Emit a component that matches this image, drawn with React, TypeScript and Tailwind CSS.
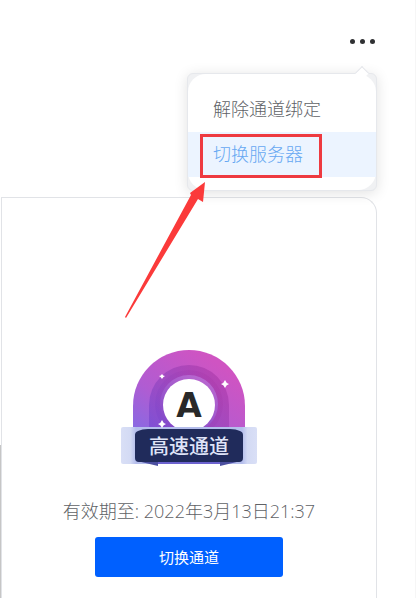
import React from "react";

function ChannelBadge() {
  return (
    <svg
      width="136"
      height="118"
      viewBox="0 0 136 118"
      role="img"
      aria-label="A 高速通道"
    >
      <defs>
        <linearGradient id="arch" x1="0" y1="1" x2="0.75" y2="0.15">
          <stop offset="0" stopColor="#806ce6" />
          <stop offset="0.45" stopColor="#b05cd2" />
          <stop offset="1" stopColor="#cf54c2" />
        </linearGradient>
        <linearGradient id="inner" x1="0" y1="1" x2="0.9" y2="0.2">
          <stop offset="0" stopColor="#7048d4" />
          <stop offset="0.5" stopColor="#9245bf" />
          <stop offset="1" stopColor="#ad3cac" />
        </linearGradient>
        <linearGradient id="ring" x1="0" y1="1" x2="0.6" y2="0">
          <stop offset="0" stopColor="#7a45c8" />
          <stop offset="1" stopColor="#b766cf" />
        </linearGradient>
        <linearGradient id="wing" x1="0" y1="0" x2="1" y2="0">
          <stop offset="0" stopColor="#d9dff6" />
          <stop offset="0.07" stopColor="#d3daf4" />
          <stop offset="0.11" stopColor="#b4bdec" />
          <stop offset="0.89" stopColor="#b4bdec" />
          <stop offset="0.93" stopColor="#d3daf4" />
          <stop offset="1" stopColor="#d9dff6" />
        </linearGradient>
      </defs>
      <path d="M12 90V57a56 56 0 0 1 112 0v33z" fill="url(#arch)" />
      <path d="M28 90V56a40 40 0 0 1 80 0v34z" fill="url(#inner)" opacity="0.7" />
      <circle cx="68" cy="55" r="34" fill="url(#inner)" opacity="0.5" />
      <circle cx="68" cy="55" r="29" fill="url(#ring)" />
      <circle cx="68" cy="56" r="26" fill="#fff" />
      <rect x="0" y="78" width="136" height="37" rx="2" fill="url(#wing)" />
      <rect x="34" y="112" width="68" height="3" fill="#6c62cf" />
      <path d="M16 112l21 5v-5zM120 112l-21 5v-5z" fill="#4c4fa0" />
      <path
        d="M17 82q4-2 10-2h82q6 0 10 2 3 1 3 4v23q0 4-4 4H18q-4 0-4-4V86q0-3 3-4z"
        fill="#202b5b"
      />
      <path
        d="M104 31q1 3 4 4-3 1-4 4-1-3-4-4 3-1 4-4zM41 25q1 2 3 2-2 1-3 3-1-2-3-3 2 0 3-2zM41 71q1 3 4 4-3 1-4 4-1-3-4-4 3-1 4-4z"
        fill="#fff"
      />
      <text
        x="68"
        y="68"
        textAnchor="middle"
        fill="#292929"
        className="font-['DejaVu_Sans',sans-serif] text-[33px] font-bold"
      >
        A
      </text>
      <text
        x="68"
        y="105"
        textAnchor="middle"
        fill="#dfe4f8"
        className="font-['Noto_Sans_CJK_SC',sans-serif] text-[20px] font-medium"
      >
        高速通道
      </text>
    </svg>
  );
}

function ChannelMenu() {
  return (
    <div className="absolute top-[73px] right-[39px] w-[190px] rounded-md border border-[#e6e8ec] bg-[#f0f1f3] shadow-[0_2px_14px_rgba(0,0,0,0.12)]">
      <ul className="relative rounded-[18px] bg-white pt-[13px] pb-[13px] text-[18px] font-light">
        <li>
          <button className="block h-[45px] w-full pl-[25px] text-left text-[#606266]">
            解除通道绑定
          </button>
        </li>
        <li>
          <button className="block h-[45px] w-full bg-[#ecf4ff] pl-[25px] text-left text-[#66a8f2]">
            切换服务器
          </button>
        </li>
      </ul>
      <span className="absolute -top-[6px] right-[9px] size-[10px] rotate-45 border-t border-l border-[#e4e6ea] bg-white" />
      <span className="pointer-events-none absolute top-[60px] left-[12px] h-[44px] w-[122px] border-3 border-[#ee3a40]" />
      <svg
        className="pointer-events-none absolute top-[107px] -left-[64px]"
        width="84"
        height="140"
        viewBox="0 0 84 140"
        aria-hidden="true"
      >
        <path d="M81 1L79 21 74 18 2 137 1 136 67 14 66 12z" fill="#fb3a3a" />
      </svg>
    </div>
  );
}

export default function App() {
  return (
    <div className="relative flex min-h-screen flex-col overflow-hidden bg-white font-['Open_Sans','Noto_Sans_CJK_SC',sans-serif]">
      <header className="relative z-10 flex h-[197px] items-start justify-end pt-[33px] pr-[39px]">
        <button aria-label="更多" className="flex h-4 items-center gap-[5px] px-[2px]">
          <span className="size-[5px] rounded-full bg-[#303133]" />
          <span className="size-[5px] rounded-full bg-[#303133]" />
          <span className="size-[5px] rounded-full bg-[#303133]" />
        </button>
        <ChannelMenu />
      </header>
      <main className="mr-[39px] ml-px flex grow flex-col items-center rounded-tr-[16px] border-t border-r border-l border-[#e1e3e7] pt-[151px]">
        <ChannelBadge />
        <p className="mt-[30px] text-[18px] leading-[28px] font-light text-[#606266]">
          有效期至: 2022年3月13日21:37
        </p>
        <button className="mt-[12px] h-10 w-[188px] rounded-[3px] bg-[#0060ff] text-[15px] text-white">
          切换通道
        </button>
      </main>
      <span className="absolute bottom-0 left-0 h-[153px] w-px bg-[#c6c6c6]" />
      <span className="absolute inset-y-0 right-0 w-px bg-[#f6f6f6]" />
    </div>
  );
}
